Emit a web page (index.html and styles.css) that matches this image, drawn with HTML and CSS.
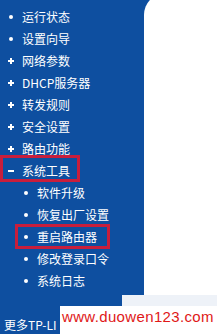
FILE: index.html
```html
<!DOCTYPE html>
<html lang="zh-CN">
<head>
<meta charset="utf-8">
<link rel="stylesheet" href="styles.css">
</head>
<body>
<div class="page">
  <nav class="nav">
    <ul class="menu">
      <li class="item"><span class="mark"><i class="dot"></i></span>运行状态</li>
      <li class="item"><span class="mark"><i class="dot"></i></span>设置向导</li>
      <li class="item"><span class="mark"><i class="plus"></i></span>网络参数</li>
      <li class="item"><span class="mark"><i class="plus"></i></span>DHCP服务器</li>
      <li class="item"><span class="mark"><i class="plus"></i></span>转发规则</li>
      <li class="item"><span class="mark"><i class="plus"></i></span>安全设置</li>
      <li class="item"><span class="mark"><i class="plus"></i></span>路由功能</li>
      <li class="item hl-top"><span class="mark"><i class="minus"></i></span>系统工具</li>
      <li class="item sub"><span class="mark"><i class="dot"></i></span>软件升级</li>
      <li class="item sub"><span class="mark"><i class="dot"></i></span>恢复出厂设置</li>
      <li class="item sub hl-sub"><span class="mark"><i class="dot"></i></span>重启路由器</li>
      <li class="item sub"><span class="mark"><i class="dot"></i></span>修改登录口令</li>
      <li class="item sub"><span class="mark"><i class="dot"></i></span>系统日志</li>
    </ul>
    <div class="more">更多TP-LI</div>
  </nav>
  <main class="content"></main>
</div>
<div class="faint"></div>
<div class="watermark">www.duowen123.com</div>
</body>
</html>
```
FILE: styles.css
```css
html, body {
  margin: 0;
  padding: 0;
}
body {
  width: 217px;
  height: 334px;
  overflow: hidden;
  background: #0e4fa0;
  position: relative;
  font-family: "Noto Sans CJK SC", sans-serif;
  font-size: 12px;
  color: #fff;
}
.page {
  display: flex;
  height: 334px;
}
.nav {
  width: 144px;
  flex: none;
  display: flex;
  flex-direction: column;
}
.menu {
  list-style: none;
  margin: 0;
  padding: 6px 0 0 0;
}
.item {
  height: 22px;
  line-height: 22px;
  display: flex;
  align-items: center;
  white-space: nowrap;
  position: relative;
}
.item.sub {
  padding-left: 15px;
}
.mark {
  width: 22px;
  flex: none;
  display: flex;
  justify-content: center;
  align-items: center;
}
.dot {
  display: block;
  width: 4px;
  height: 4px;
  border-radius: 50%;
  background: #fff;
}
.plus {
  display: block;
  width: 6px;
  height: 6px;
  position: relative;
}
.plus::before, .plus::after {
  content: "";
  position: absolute;
  background: #fff;
}
.plus::before {
  left: 0;
  top: 2px;
  width: 6px;
  height: 2px;
}
.plus::after {
  left: 2px;
  top: 0;
  width: 2px;
  height: 6px;
}
.minus {
  display: block;
  width: 6px;
  height: 2px;
  background: #fff;
}
.hl-top::after, .hl-sub::after {
  content: "";
  position: absolute;
  border: 3px solid #c81e3c;
  box-sizing: border-box;
}
.hl-top::after {
  left: 0;
  top: -5px;
  width: 80px;
  height: 27px;
}
.hl-sub::after {
  left: 15px;
  top: -2px;
  width: 95px;
  height: 25px;
}
.more {
  margin-top: 22px;
  width: 60px;
  box-sizing: border-box;
  height: 22px;
  line-height: 22px;
  padding-left: 4px;
  white-space: nowrap;
  overflow: hidden;
}
.content {
  flex: 1;
  background: #fff;
  margin-top: -7px;
  border-top-left-radius: 22px;
}
.faint {
  position: absolute;
  left: 122px;
  top: 295px;
  width: 95px;
  height: 11px;
  background: #eef2f8;
}
.watermark {
  position: absolute;
  left: 60px;
  top: 306px;
  right: 0;
  bottom: 0;
  background: #fff;
  color: #e01818;
  font-family: "Liberation Sans", Arial, sans-serif;
  font-size: 15px;
  letter-spacing: 0.35px;
  line-height: 22px;
  padding-left: 2px;
  white-space: nowrap;
}
```
